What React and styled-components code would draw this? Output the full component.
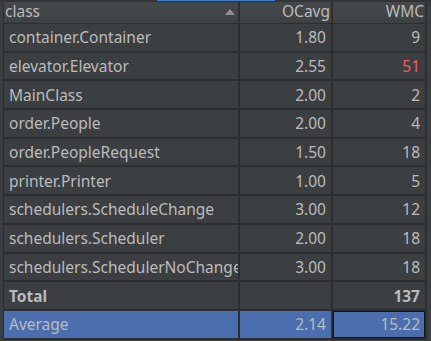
import { Fragment } from "react";
import styled, { createGlobalStyle } from "styled-components";

const GlobalStyle = createGlobalStyle`
  html, body {
    margin: 0;
    padding: 0;
    background: #3c3f41;
  }
  body {
    font-family: "Noto Sans", "Open Sans", sans-serif;
  }
`;

const Panel = styled.div`
  width: 431px;
  height: 341px;
  overflow: hidden;
  background: #3c3f41;
  color: #bbbbbb;
  font-size: 15.5px;
`;

const TopStrip = styled.div`
  height: 2px;
  background: #323436;
  display: flex;
`;

const TabMark = styled.div`
  margin-left: 157px;
  width: 118px;
  height: 1px;
  background: #3d7ed6;
`;

const Table = styled.div`
  margin-left: 3px;
  width: 424px;
  display: grid;
  grid-template-columns: 236px 93px 94px;
  border-left: 1px solid #2c2e30;
`;

const HeadCell = styled.div`
  box-sizing: border-box;
  height: 22px;
  display: flex;
  align-items: center;
  justify-content: ${(p) => (p.$align === "left" ? "space-between" : "flex-end")};
  padding: ${(p) => (p.$align === "left" ? "0 3px 1px 1px" : "0 1px 1px 0")};
  background: linear-gradient(#45484a, #3f4244);
  border-right: 2px solid #2d2f31;
  border-bottom: 1px solid #2b2d2f;
  line-height: 1;
`;

const SortArrow = styled.span`
  width: 0;
  height: 0;
  border-left: 5px solid transparent;
  border-right: 5px solid transparent;
  border-bottom: 6px solid #8e9193;
`;

const Cell = styled.div`
  box-sizing: border-box;
  height: 28.7px;
  display: flex;
  align-items: center;
  justify-content: ${(p) => (p.$numeric ? "flex-end" : "flex-start")};
  padding: ${(p) => (p.$numeric ? "0 5px 0 0" : "0 0 0 5px")};
  border-right: 2px solid #2c2e30;
  border-bottom: 2px solid #2c2e30;
  white-space: nowrap;
  overflow: hidden;
  font-weight: ${(p) => (p.$bold ? 700 : 400)};
  color: ${(p) => (p.$alert ? "#ee5f5d" : "#bbbbbb")};
  background: ${(p) => (p.$selected ? "#4b6eaf" : "transparent")};
  ${(p) => p.$focused && "box-shadow: inset 0 0 0 1px #111213;"}
`;

const rows = [
  ["container.Container", "1.80", "9"],
  ["elevator.Elevator", "2.55", "51"],
  ["MainClass", "2.00", "2"],
  ["order.People", "2.00", "4"],
  ["order.PeopleRequest", "1.50", "18"],
  ["printer.Printer", "1.00", "5"],
  ["schedulers.ScheduleChange", "3.00", "12"],
  ["schedulers.Scheduler", "2.00", "18"],
  ["schedulers.SchedulerNoChange", "3.00", "18"],
];

const App = () => {
  return (
    <Panel>
      <GlobalStyle />
      <TopStrip>
        <TabMark />
      </TopStrip>
      <Table>
        <HeadCell $align="left">
          class
          <SortArrow />
        </HeadCell>
        <HeadCell>OCavg</HeadCell>
        <HeadCell>WMC</HeadCell>

        {rows.map(([name, ocavg, wmc]) => (
          <Fragment key={name}>
            <Cell>{name}</Cell>
            <Cell $numeric>{ocavg}</Cell>
            <Cell $numeric $alert={Number(wmc) > 50}>{wmc}</Cell>
          </Fragment>
        ))}

        <Cell $bold>Total</Cell>
        <Cell $numeric />
        <Cell $numeric $bold>137</Cell>

        <Cell $selected>Average</Cell>
        <Cell $selected $numeric>2.14</Cell>
        <Cell $selected $numeric $focused>15.22</Cell>
      </Table>
    </Panel>
  );
};

export default App;
